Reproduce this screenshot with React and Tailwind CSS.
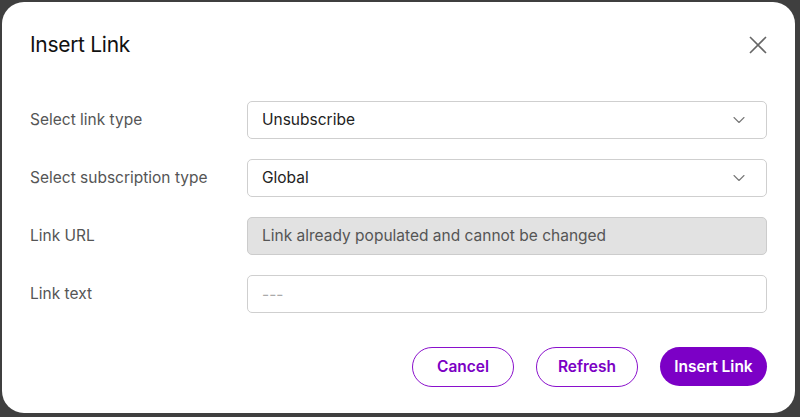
import { ChevronDown } from 'lucide-react';

const font = { fontFamily: 'Inter, "Noto Sans", sans-serif' };

function Row({ label, children }) {
  return (
    <div className="flex items-center">
      <label className="w-[217px] text-[15.5px] text-[#555]">{label}</label>
      <div className="flex-1">{children}</div>
    </div>
  );
}

function SelectBox({ value }) {
  return (
    <div className="h-[38px] flex items-center justify-between pl-[14px] pr-[17px] border border-[#cfcfcf] rounded-[5px] bg-white text-[15.5px] text-[#222]">
      <span>{value}</span>
      <ChevronDown size={20} strokeWidth={1.3} className="text-[#777]" />
    </div>
  );
}

export default function App() {
  return (
    <div className="w-[800px] h-[417px] bg-[#3f3f3f] pt-[2px] pl-[2px] pr-[5px] pb-[4px]" style={font}>
      <div className="h-full bg-white rounded-[22px] pl-[28px] pr-[28px] pt-[29px] flex flex-col">
        <div className="flex items-center justify-between h-[28px]">
          <h2 className="text-[21px] text-[#111] tracking-[-0.3px]">Insert Link</h2>
          <button className="text-[#666]">
            <svg width="18" height="18" viewBox="0 0 18 18" fill="none" stroke="currentColor" strokeWidth="1.6">
              <path d="M1 1L17 17M17 1L1 17" />
            </svg>
          </button>
        </div>

        <div className="mt-[42px] flex flex-col gap-[20px]">
          <Row label="Select link type"><SelectBox value="Unsubscribe" /></Row>
          <Row label="Select subscription type"><SelectBox value="Global" /></Row>
          <Row label="Link URL">
            <div className="h-[38px] flex items-center pl-[14px] border border-[#cccccc] rounded-[5px] bg-[#e2e2e2] text-[15.5px] text-[#555]">
              Link already populated and cannot be changed
            </div>
          </Row>
          <Row label="Link text">
            <input
              placeholder="---"
              className="w-full h-[38px] pl-[14px] border border-[#cfcfcf] rounded-[5px] bg-white text-[15.5px] text-[#222] placeholder:text-[#aaa] outline-none"
            />
          </Row>
        </div>

        <div className="mt-[34px] flex justify-end gap-[22px]">
          <button className="w-[102px] h-[40px] rounded-full border border-[#8a10cc] text-[#7b00c4] text-[15.5px] font-semibold">Cancel</button>
          <button className="w-[102px] h-[40px] rounded-full border border-[#8a10cc] text-[#7b00c4] text-[15.5px] font-semibold">Refresh</button>
          <button className="w-[107px] h-[39px] rounded-full bg-[#7c00c6] text-white text-[15.5px] font-semibold">Insert Link</button>
        </div>
      </div>
    </div>
  );
}
